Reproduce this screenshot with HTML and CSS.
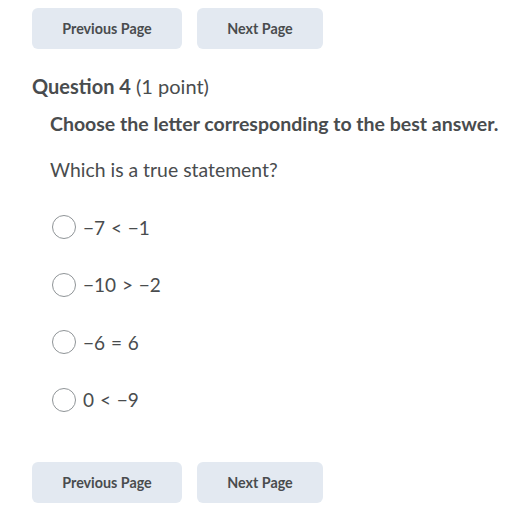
FILE: index.html
```html
<!DOCTYPE html>
<html>
<head>
<meta charset="utf-8">
<link rel="stylesheet" href="styles.css">
</head>
<body>
<div class="page">
  <div class="nav">
    <button class="btn btn-prev">Previous Page</button>
    <button class="btn btn-next">Next Page</button>
  </div>
  <h2 class="q-title"><strong>Question 4</strong> (1 point)</h2>
  <div class="q-body">
    <p class="instr">Choose the letter corresponding to the best answer.</p>
    <p class="prompt">Which is a true statement?</p>
    <ul class="options">
      <li class="opt"><span class="radio"></span><span class="label">−7 &lt; −1</span></li>
      <li class="opt"><span class="radio"></span><span class="label">−10 &gt; −2</span></li>
      <li class="opt"><span class="radio"></span><span class="label">−6 = 6</span></li>
      <li class="opt"><span class="radio"></span><span class="label">0 &lt; −9</span></li>
    </ul>
  </div>
  <div class="nav nav-bottom">
    <button class="btn btn-prev">Previous Page</button>
    <button class="btn btn-next">Next Page</button>
  </div>
</div>
</body>
</html>
```
FILE: styles.css
```css
html, body {
  margin: 0;
  padding: 0;
  background: #ffffff;
}
body {
  font-family: Lato, "Open Sans", sans-serif;
  color: #494c4e;
}
.page {
  padding: 8px 0 0 32px;
}
.nav {
  display: flex;
  gap: 15px;
}
.btn {
  font-family: Lato, sans-serif;
  font-size: 14.3px;
  font-weight: 700;
  color: #494c4e;
  background: #e3e9f1;
  border: none;
  border-radius: 6px;
  height: 41px;
  padding: 0;
}
.btn-prev { width: 150px; }
.btn-next { width: 126px; }
.q-title {
  margin: 0;
  padding-top: 25px;
  font-size: 20px;
  line-height: 24px;
  font-weight: 400;
  color: #494c4e;
}
.q-title strong { font-weight: 700; }
.q-body {
  padding-left: 18px;
}
.instr {
  margin: 14px 0 0;
  font-size: 19.5px;
  line-height: 24px;
  font-weight: 700;
}
.prompt {
  margin: 22px 0 0;
  font-size: 19.4px;
  line-height: 24px;
}
.options {
  list-style: none;
  margin: 33px 0 0;
  padding: 0;
  display: flex;
  flex-direction: column;
  gap: 33.5px;
}
.opt {
  display: flex;
  align-items: center;
  height: 24px;
  font-size: 19px;
}
.label { word-spacing: 1px; }
.radio {
  box-sizing: border-box;
  width: 24px;
  height: 24px;
  border: 1px solid #8f9497;
  border-radius: 50%;
  margin-left: 2px;
  margin-right: 7px;
  background: #fff;
}
.nav-bottom {
  margin-top: 50px;
}
```
